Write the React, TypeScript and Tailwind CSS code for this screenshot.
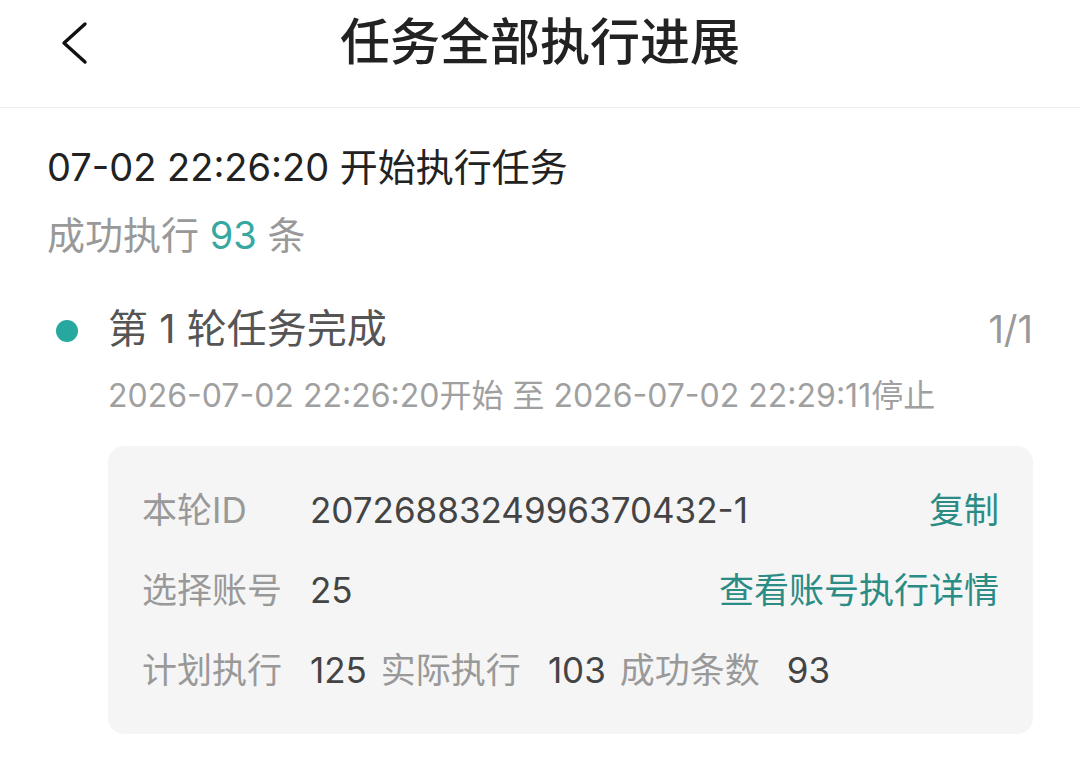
const font = { fontFamily: 'Inter, "Noto Sans CJK SC", "Noto Sans", sans-serif' };

/**
 * Task execution progress page: a header with a back button, a summary of the
 * run and one card per round with its ID, account count and totals.
 */
export default function App() {
  return (
    <div className="h-[775px] w-[1080px] bg-white" style={font}>
      {/* Header */}
      <header className="relative flex h-[108px] items-center justify-center border-b border-[#eeeeee]">
        <button className="absolute left-[58px] top-[19px] text-[#111111]">
          <svg width="32" height="48" viewBox="0 0 32 48" fill="none">
            <polyline
              points="27,5 6,24 27,43"
              stroke="currentColor"
              strokeWidth="3.4"
              strokeLinecap="round"
              strokeLinejoin="round"
            />
          </svg>
        </button>
        <h1 className="-mt-[24px] text-[50px] font-medium leading-[56px] text-[#222222]">
          任务全部执行进展
        </h1>
      </header>

      <main className="px-[47px]">
        {/* Run summary */}
        <p className="mt-[31px] text-[38px] leading-[56px] text-[#222222]">
          07-02 22:26:20 开始执行任务
        </p>
        <p className="mt-[12px] text-[38px] leading-[56px] text-[#999999]">
          成功执行 <span className="text-[#36a8a0]">93</span> 条
        </p>

        {/* Round heading */}
        <div className="mt-[38px] flex items-center">
          <span className="ml-[9px] mr-[30px] mt-[4px] h-[22px] w-[22px] rounded-full bg-[#26a89e]" />
          <span className="flex-1 text-[40px] leading-[56px] text-[#555555]">第 1 轮任务完成</span>
          <span className="text-[38px] leading-[56px] text-[#999999]">1/1</span>
        </div>
        <p className="ml-[61px] mt-[15px] text-[32px] leading-[48px] text-[#a0a0a0]">
          2026-07-02 22:26:20开始 至 2026-07-02 22:29:11停止
        </p>

        {/* Round details */}
        <div className="ml-[61px] mt-[26px] rounded-[16px] bg-[#f5f5f5] px-[34px] py-[24px] text-[35px]">
          <div className="flex h-[80px] items-center">
            <span className="w-[168px] text-[#999999]">本轮ID</span>
            <span className="flex-1 text-[#444444]">2072688324996370432-1</span>
            <span className="text-[#2a8c84]">复制</span>
          </div>
          <div className="flex h-[80px] items-center">
            <span className="w-[168px] text-[#999999]">选择账号</span>
            <span className="flex-1 text-[#444444]">25</span>
            <span className="text-[#2a8c84]">查看账号执行详情</span>
          </div>
          <div className="flex h-[80px] items-center">
            <span className="w-[168px] text-[#999999]">计划执行</span>
            <span className="mr-[14px] text-[#444444]">125</span>
            <span className="mr-[27px] text-[#999999]">实际执行</span>
            <span className="mr-[14px] text-[#444444]">103</span>
            <span className="mr-[27px] text-[#999999]">成功条数</span>
            <span className="text-[#444444]">93</span>
          </div>
        </div>
      </main>
    </div>
  );
}
